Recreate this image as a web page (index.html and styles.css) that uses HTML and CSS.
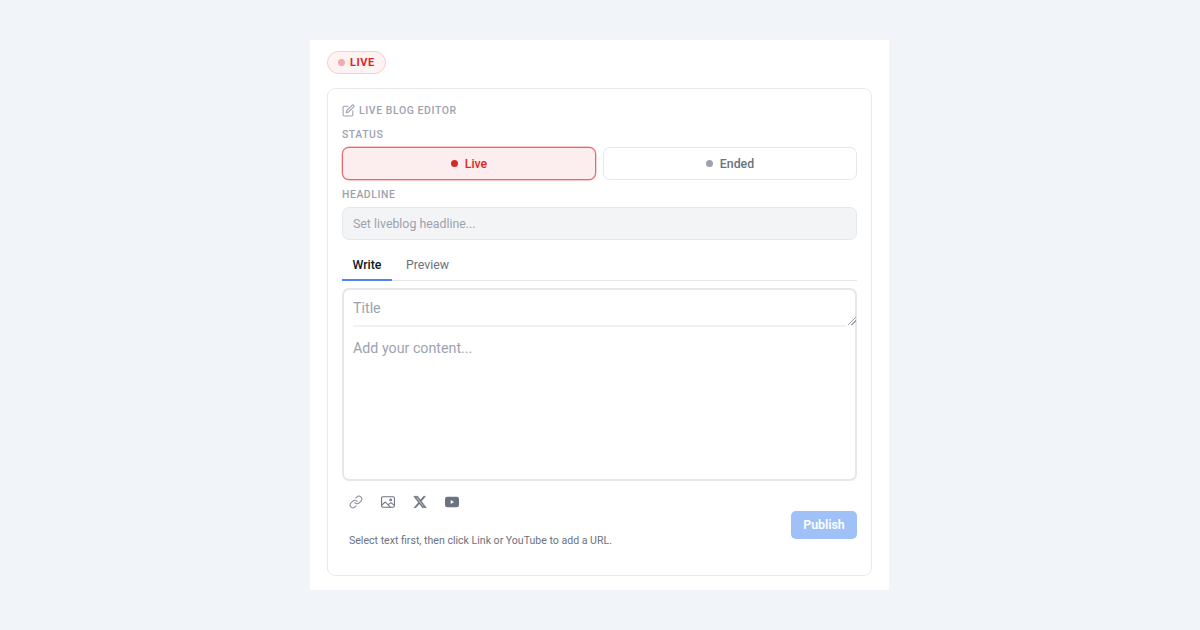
FILE: index.html
```html
<!DOCTYPE html>
<html lang="en">
<head>
<meta charset="utf-8">
<title>Live Blog Editor</title>
<link rel="stylesheet" href="styles.css">
</head>
<body>
<main class="panel">
  <div class="badge"><span class="badge-dot"></span>LIVE</div>
  <section class="card">
    <div class="card-title">
      <svg class="edit-icon" viewBox="0 0 24 24" fill="none" stroke="currentColor" stroke-width="2" stroke-linecap="round" stroke-linejoin="round"><path d="M11 4H4a2 2 0 0 0-2 2v14a2 2 0 0 0 2 2h14a2 2 0 0 0 2-2v-7"/><path d="M18.500 2.500a2.120 2.120 0 0 1 3 3L12 15l-4 1 1-4 9.500-9.500z"/></svg>
      <span>LIVE BLOG EDITOR</span>
    </div>
    <div class="label label-status">STATUS</div>
    <div class="status-row">
      <button class="status status-live"><span class="dot dot-live"></span>Live</button>
      <button class="status status-ended"><span class="dot dot-ended"></span>Ended</button>
    </div>
    <div class="label label-headline">HEADLINE</div>
    <input class="headline" type="text" placeholder="Set liveblog headline...">
    <div class="tabs">
      <div class="tab tab-active">Write</div>
      <div class="tab">Preview</div>
    </div>
    <div class="editor">
      <textarea class="title-input" placeholder="Title"></textarea>
      <div class="divider"></div>
      <div class="content">Add your content...</div>
    </div>
    <div class="footer">
      <div class="footer-left">
        <div class="tools">
          <svg class="tool tool-link" viewBox="0 0 24 24" fill="none" stroke="currentColor" stroke-width="1.800" stroke-linecap="round" stroke-linejoin="round"><path d="M10 13a5 5 0 0 0 7.540.540l3-3a5 5 0 0 0-7.070-7.070l-1.720 1.710"/><path d="M14 11a5 5 0 0 0-7.540-.540l-3 3a5 5 0 0 0 7.070 7.070l1.710-1.710"/></svg>
          <svg class="tool tool-image" viewBox="0 0 24 24" fill="none" stroke="currentColor" stroke-width="1.800" stroke-linecap="round" stroke-linejoin="round"><rect x="1" y="3" width="22" height="18" rx="2"/><circle cx="16.500" cy="8.500" r="1.500"/><path d="M1.500 17l6-5 8 8.500"/><path d="M13 16l4-3 5.500 4.500"/></svg>
          <svg class="tool tool-x" viewBox="0 0 24 24" fill="currentColor"><path d="M18.240 2.250h3.310l-7.230 8.260 8.500 11.240H16.170l-5.210-6.820-5.970 6.820H1.680l7.730-8.840L1.250 2.250H8.080l4.710 6.230 5.450-6.230zm-1.160 17.520h1.830L7.080 4.130H5.120l11.960 15.640z"/></svg>
          <svg class="tool" viewBox="0 0 24 24" fill="currentColor"><path fill-rule="evenodd" d="M4 3h16a4 4 0 0 1 4 4v10a4 4 0 0 1-4 4H4a4 4 0 0 1-4-4V7a4 4 0 0 1 4-4zm5.800 5.700v6.600l5.700-3.300-5.700-3.300z"/></svg>
        </div>
        <p class="hint">Select text first, then click Link or YouTube to add a URL.</p>
      </div>
      <button class="publish">Publish</button>
    </div>
  </section>
</main>
</body>
</html>
```
FILE: styles.css
```css
* { box-sizing: border-box; }
html, body { margin: 0; height: 630px; overflow: hidden; }
body {
  background: #f1f5f9;
  font-family: Roboto, "Liberation Sans", sans-serif;
  display: flex;
  justify-content: center;
  padding-top: 40px;
}
.panel {
  width: 579px;
  height: 550px;
  margin-left: -1px;
  background: #fff;
  padding: 11px 17px 14px;
}
.badge {
  display: inline-flex;
  align-items: center;
  gap: 5px;
  height: 23px;
  width: 59px;
  padding-left: 10px;
  border: 1px solid #fecaca;
  border-radius: 12px;
  background: #fef2f2;
  color: #dc2626;
  font-size: 11px;
  font-weight: 700;
  letter-spacing: .55px;
  vertical-align: top;
}
.badge-dot { width: 7px; height: 7px; border-radius: 50%; background: #f4a9ab; }
.card {
  margin-top: 14px;
  width: 545px;
  height: 488px;
  border: 1px solid #e8eaee;
  border-radius: 8px;
  padding: 14px;
  display: flex;
  flex-direction: column;
  color: #6b7280;
}
.card-title {
  display: flex;
  align-items: center;
  gap: 4px;
  height: 14px;
  color: #9ca3af;
  font-size: 10.450px;
  font-weight: 500;
  letter-spacing: .6px;
}
.edit-icon { width: 13px; height: 13px; }
.label {
  color: #9ca3af;
  font-size: 10.450px;
  font-weight: 500;
  letter-spacing: .55px;
  line-height: 14px;
}
.label-status { margin-top: 11px; }
.label-headline { margin-top: 8px; }
.status-row { display: flex; gap: 7px; margin-top: 5px; }
.status {
  flex: 1;
  height: 33px;
  display: flex;
  align-items: center;
  justify-content: center;
  gap: 7px;
  border-radius: 7px;
  font: 500 12.350px Roboto, sans-serif;
}
.status-live { border: 1px solid #e8696d; background: #fceeee; color: #dc2626; box-shadow: 0 0 0 .4px #ee8b8e; }
.status-ended { border: 1px solid #e5e7eb; background: #fff; color: #6b7280; }
.dot { width: 7px; height: 7px; border-radius: 50%; }
.dot-live { background: #dc2626; }
.dot-ended { background: #9ca3af; }
.headline {
  margin-top: 5px;
  width: 100%;
  height: 33px;
  border: 1px solid #e5e7eb;
  border-radius: 7px;
  background: #f3f4f6;
  padding: 0 10px;
  font: 400 12.350px Roboto, sans-serif;
}
.headline::placeholder { color: #9ca3af; opacity: 1; }
.tabs {
  display: flex;
  gap: 14px;
  margin-top: 8px;
  border-bottom: 1px solid #e5e7eb;
  height: 33px;
}
.tab { padding-top: 10px; font-size: 12.350px; color: #6b7280; }
.tab-active { width: 50px; height: 33px; text-align: center; color: #111827; font-weight: 500; border-bottom: 2px solid #4f86ee; }
.editor {
  margin-top: 7px;
  height: 193px;
  border: 2px solid #e5e7eb;
  border-radius: 7px;
  padding: 0 0 0 9px;
  flex: none;
}
.title-input {
  display: block;
  width: 503px;
  height: 35px;
  min-height: 35px;
  margin: 0;
  border: 0;
  background: transparent;
  outline: 0;
  padding: 9px 0 0;
  font: 400 14.250px/18px Roboto, sans-serif;
  color: #374151;
  resize: vertical;
}
.title-input::placeholder { color: #9ca3af; opacity: 1; }
.title-input::-webkit-resizer {
  background: linear-gradient(135deg, transparent 15px, #9ca3af 15px 16px, transparent 16px 17.400px, #9ca3af 17.400px 18.400px, transparent 18.400px);
}
.divider { height: 1.500px; margin-right: 9px; background: #f0f1f3; }
.content { margin-top: 12.500px; font-size: 14.250px; line-height: 18px; color: #9ca3af; }
.footer { display: flex; justify-content: space-between; }
.footer-left { display: flex; flex-direction: column; }
.tools { display: flex; gap: 18px; margin: 13.500px 0 0 7px; color: #6b7280; }
.tool { width: 14px; height: 14px; }
.tool-link { color: #868d99; }
.tool-x { stroke: currentColor; stroke-width: .8; }
.hint { margin: 25.500px 0 0 7px; font-size: 10.570px; line-height: 14px; color: #6b7280; }
.publish {
  width: 66px;
  height: 28px;
  margin-top: 29.500px;
  border: 0;
  border-radius: 5px;
  background: #a0c0f8;
  color: #fff;
  font: 600 12.350px Roboto, sans-serif;
}
```
